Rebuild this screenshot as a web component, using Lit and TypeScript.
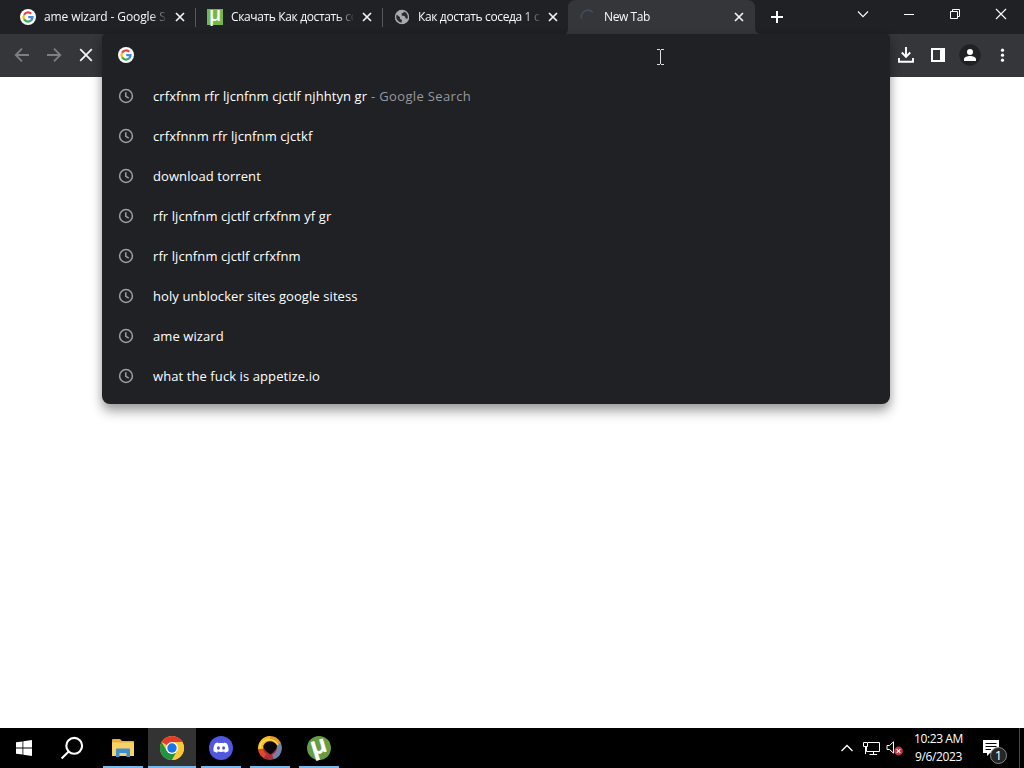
import { LitElement, html, css, svg, nothing } from "lit";
import { customElement, property } from "lit/decorators.js";

const googleIcon = html`
  <svg width="16" height="16" viewBox="0 0 16 16">
    <circle cx="8" cy="8" r="8" fill="#fff" />
    <g fill="none" stroke-width="2.2">
      <path d="M4.1 5.7A4.5 4.5 0 0 1 11.2 4.8" stroke="#ea4335" />
      <path d="M4.1 10.3A4.6 4.6 0 0 1 4.1 5.7" stroke="#fbbc05" />
      <path d="M10.9 11.5A4.5 4.5 0 0 1 4.1 10.3" stroke="#34a853" />
      <path d="M8.2 8.1H12.5A4.5 4.5 0 0 1 10.8 11.5" stroke="#4285f4" />
    </g>
  </svg>`;

const utorrentIcon = html`
  <svg width="16" height="16" viewBox="0 0 16 16">
    <rect width="16" height="16" fill="#76b74a" />
    <text x="8" y="12" text-anchor="middle" font-family="Open Sans, sans-serif" font-size="19" font-weight="600" fill="#fff">µ</text>
  </svg>`;

const globeIcon = html`
  <svg width="16" height="16" viewBox="0 0 16 16">
    <circle cx="8" cy="8" r="7" fill="#a9abae" />
    <path d="M2.4 5.2L6 8.2L6.2 10L8 11L7.6 14L5.5 13.2L2.2 10.2L1.5 7ZM9.2 1.3L10 3.2L7.6 4.6L7.8 6.5L10.8 7.2L11.8 9.5L13.6 10L14.5 7L12.5 3Z" fill="#2b2c2f" />
    <circle cx="8" cy="8" r="6.5" fill="none" stroke="#a9abae" stroke-width="1.3" />
  </svg>`;

const spinnerIcon = html`
  <svg width="16" height="16" viewBox="0 0 16 16">
    <path d="M1.5 9.5A6.7 6.7 0 0 1 12.8 3.3" fill="none" stroke="#414b66" stroke-width="1.6" />
  </svg>`;

const historyIcon = html`
  <svg width="16" height="16" viewBox="0 0 16 16" fill="none" stroke="#9aa0a6" stroke-width="1.5">
    <circle cx="8" cy="8" r="6.4" />
    <path d="M7.8 4.2V8.3L10.8 10.1" />
  </svg>`;

// square stroked icon, drawn on a grid of its own size
const line = (size: number, d: string, width = 1, color = "#fff") => html`
  <svg width=${size} height=${size} viewBox="0 0 ${size} ${size}" fill="none" stroke=${color} stroke-width=${width}>
    ${svg`<path d=${d} />`}
  </svg>`;

const chromeIcon = html`
  <svg width="24" height="24" viewBox="0 0 24 24">
    <circle cx="12" cy="12" r="12" fill="#fcc934" />
    <path d="M12 12L1.6 6A12 12 0 0 1 22.4 6H12Z" fill="#e33b2e" />
    <path d="M1.6 6A12 12 0 0 0 12 24L17.2 15L12 12L6.8 15Z" fill="#229342" />
    <path d="M12 6H22.4A12 12 0 0 1 12 24L17.2 15Z" fill="#fcc934" />
    <circle cx="12" cy="12" r="6" fill="#fff" />
    <circle cx="12" cy="12" r="4.7" fill="#1a73e8" />
  </svg>`;

const explorerIcon = html`
  <svg width="22" height="18" viewBox="0 0 22 18">
    <path d="M0 1.2Q0 0 1 0H8L10 2H21Q22 2 22 3V17H0Z" fill="#e9b13c" />
    <path d="M0 3.5H22V17H0Z" fill="#f8d264" />
    <path d="M4 18V10.5Q4 9.5 5 9.5H17Q18 9.5 18 10.5V18H14.5V14H7.5V18Z" fill="#3f8fd0" />
  </svg>`;

const discordIcon = html`
  <svg width="24" height="24" viewBox="0 0 24 24">
    <circle cx="12" cy="12" r="12" fill="#5058e0" />
    <path d="M9.4 6.4L8.9 7.2C10.9 6.8 13.1 6.8 15.1 7.2L14.6 6.4C16 6.5 17.2 7 17.9 7.4C19.3 9.7 19.8 12.3 19.5 15.1C18.3 16.1 17.2 16.5 16 16.8L15.2 15.5C13.2 16 10.8 16 8.8 15.5L8 16.8C6.8 16.5 5.7 16.1 4.5 15.1C4.2 12.3 4.7 9.7 6.1 7.4C6.9 6.9 8 6.5 9.4 6.4Z" fill="#fff" />
    <ellipse cx="9.4" cy="12" rx="1.5" ry="1.7" fill="#5058e0" />
    <ellipse cx="14.6" cy="12" rx="1.5" ry="1.7" fill="#5058e0" />
  </svg>`;

const ringIcon = html`
  <svg width="24" height="24" viewBox="0 0 24 24">
    <circle cx="12" cy="12" r="11" fill="#b82a31" />
    <g fill="none" stroke-width="5">
      <path d="M9 21A9.5 9.5 0 0 1 2.5 12" stroke="#dd4a2a" />
      <path d="M16.5 20.4A9.5 9.5 0 0 1 7 20" stroke="#a8303c" />
      <path d="M20 7A9.5 9.5 0 0 1 15 21" stroke="#6f82ac" />
      <path d="M11 2.5A9.5 9.5 0 0 1 20.5 8" stroke="#ec9a2b" />
      <path d="M2.6 13A9.5 9.5 0 0 1 12 2.5" stroke="#f6bd20" />
    </g>
    <path d="M2 12Q2 5 10 3.5Q17 3.5 20 9" fill="none" stroke="#fbdf45" stroke-width="1.5" />
    <path d="M5.5 10Q6.5 6 12 5.5Q18 6 19 10Q19 14 12.5 18.5Q5.5 14.5 5.5 10Z" fill="#08080a" />
  </svg>`;

const utorrentAppIcon = html`
  <svg width="24" height="24" viewBox="0 0 24 24">
    <circle cx="12" cy="12" r="12" fill="#669c43" />
    <text x="12" y="17.5" text-anchor="middle" font-family="Open Sans, sans-serif" font-size="25" font-weight="700" fill="#fff" transform="rotate(-17 12 12)">µ</text>
  </svg>`;

const windowsIcon = html`
  <svg width="16" height="16" viewBox="0 0 16 16" fill="#fff">
    <path d="M0 2.3L6.5 1.4V7.6H0ZM7.3 1.2L16 0V7.6H7.3ZM0 8.4H6.5V14.6L0 13.7ZM7.3 8.4H16V16L7.3 14.8Z" />
  </svg>`;

@customElement("browser-tab")
export class BrowserTab extends LitElement {
  @property() label = "";
  @property({ attribute: false }) icon: unknown = nothing;
  @property({ type: Boolean, reflect: true }) active = false;
  @property({ type: Boolean, reflect: true }) divided = false;

  static styles = css`
    :host {
      box-sizing: border-box;
      display: flex;
      align-items: center;
      width: 187px;
      height: 34px;
      padding-left: 11px;
    }

    :host([divided]) {
      background: linear-gradient(#55575b, #55575b) right 8px / 1px 19px no-repeat;
    }

    :host([lang="ru"]) .label {
      letter-spacing: -0.36px;
    }

    /* the foot of the active tab flares out on both sides */
    :host([active]) {
      width: 195px;
      margin-left: -5px;
      padding-left: 15px;
      background: #35363a;
      clip-path: path("M0 34Q3 33 3 28V8Q3 0 11 0H182Q190 0 190 8V28Q190 33 195 34Z");
    }

    svg {
      display: block;
      flex: none;
      overflow: visible;
    }

    .label {
      flex: none;
      width: 122px;
      margin: 0 8px;
      white-space: nowrap;
      font-size: 12px;
      line-height: 18px;
      letter-spacing: -0.1px;
      color: #f8f9fa;
      mask-image: linear-gradient(90deg, #000 106px, transparent 124px);
    }

    :host(:not([divided])) .label {
      margin-right: 7px;
    }

    :host([active]) .label {
      letter-spacing: -0.4px;
    }
  `;

  render() {
    return html`
      ${this.icon}
      <div class="label">${this.label}</div>
      ${line(12, "M2 2L10 10M10 2L2 10", 1.7, "#f1f3f4")}
    `;
  }
}

@customElement("omnibox-popup")
export class OmniboxPopup extends LitElement {
  rows = [
    { text: "crfxfnm rfr ljcnfnm cjctlf njhhtyn gr", hint: " - Google Search" },
    { text: "crfxfnnm rfr ljcnfnm cjctkf" },
    { text: "download torrent" },
    { text: "rfr ljcnfnm cjctlf crfxfnm yf gr" },
    { text: "rfr ljcnfnm cjctlf crfxfnm" },
    { text: "holy unblocker sites google sitess" },
    { text: "ame wizard" },
    { text: "what the fuck is appetize.io" },
  ];

  static styles = css`
    :host {
      box-sizing: border-box;
      display: block;
      width: 788px;
      height: 370px;
      background: #202124;
      border-radius: 4px 4px 8px 8px;
      box-shadow: 0 8px 12px rgba(0, 0, 0, 0.3), 0 2px 8px rgba(0, 0, 0, 0.16);
    }

    svg {
      display: block;
      flex: none;
    }

    .input,
    .row {
      display: flex;
      align-items: center;
      gap: 19px;
      height: 40px;
      padding-left: 16px;
    }

    .input {
      height: 42px;
    }

    .text {
      font-size: 13px;
      line-height: 20px;
      letter-spacing: 0.09px;
      color: #fff;
      white-space: pre;
    }

    .hint {
      letter-spacing: 0.36px;
      color: #96999d;
    }
  `;

  render() {
    return html`
      <div class="input">${googleIcon}</div>
      ${this.rows.map(
        (row) => html`
          <div class="row">
            ${historyIcon}
            <div class="text">${row.text}<span class="hint">${row.hint ?? ""}</span></div>
          </div>
        `
      )}
    `;
  }
}

@customElement("task-bar")
export class TaskBar extends LitElement {
  apps = [
    { icon: explorerIcon, state: "open" },
    { icon: chromeIcon, state: "current" },
    { icon: discordIcon, state: "open" },
    { icon: ringIcon, state: "open" },
    { icon: utorrentAppIcon, state: "open" },
  ];

  static styles = css`
    :host {
      display: flex;
      height: 40px;
      background: #000;
      color: #fff;
    }

    svg {
      display: block;
      flex: none;
      overflow: visible;
    }

    .button,
    .app {
      display: flex;
      align-items: center;
      justify-content: center;
      width: 48px;
    }

    .apps {
      display: flex;
      gap: 1px;
      padding-left: 3px;
    }

    .app {
      background: linear-gradient(#76b9ed, #76b9ed) center bottom / 40px 2px no-repeat;
    }

    .app.current {
      background: linear-gradient(#76b9ed, #76b9ed) center bottom / 48px 2px no-repeat, #333;
    }

    .tray {
      display: flex;
      align-items: center;
      margin-left: auto;
    }

    .network {
      margin: 0 6px 0 9px;
    }

    .clock {
      width: 69px;
      font-size: 12px;
      line-height: 18px;
      letter-spacing: -0.4px;
      text-align: center;
      white-space: nowrap;
    }

    .notes {
      margin: 1px 12px 0 8px;
    }

    .desktop {
      width: 4px;
      height: 40px;
      border-left: 1px solid #4a4a4a;
    }
  `;

  render() {
    return html`
      <div class="button">${windowsIcon}</div>
      <div class="button">
        <svg width="24" height="24" viewBox="0 0 24 24" fill="none" stroke="#fff" stroke-width="2.1">
          <circle cx="14.2" cy="9.8" r="7.9" />
          <path d="M8.7 15.4L1.6 22.4" />
        </svg>
      </div>
      <div class="apps">
        ${this.apps.map((app) => html`<div class="app ${app.state}">${app.icon}</div>`)}
      </div>
      <div class="tray">
        ${line(14, "M1.5 10L7 4.5L12.5 10", 1.3)}
        <svg class="network" width="17" height="16" viewBox="0 0 17 16" fill="none" stroke="#fff">
          <path d="M5 2.5H16.5V11.5H3.5V7M10.5 11.5V14.5M6.5 14.5H14" />
          <path d="M0.5 2.5H4.5V6.5H0.5ZM2.5 6.5V14" />
        </svg>
        <svg width="18" height="16" viewBox="0 0 18 16">
          <path d="M1 5.5H3.5L7.5 1.8V13.2L3.5 9.5H1Z" fill="none" stroke="#fff" />
          <circle cx="12.5" cy="11" r="4.4" fill="#c9343d" />
          <path d="M10.7 9.2L14.3 12.8M14.3 9.2L10.7 12.8" stroke="#fff" stroke-width="1.1" />
        </svg>
        <div class="clock">10:23 AM<br />9/6/2023</div>
        <svg class="notes" width="26" height="26" viewBox="0 0 26 26">
          <path d="M2 4H18V17H9L6 20V17H2Z" fill="#fff" />
          <path d="M4.5 7.5H15.5M4.5 10.5H15.5M4.5 13.5H10" stroke="#000" />
          <circle cx="17.5" cy="19.5" r="8" fill="#262626" stroke="#858585" />
          <text x="17.5" y="24.2" text-anchor="middle" font-size="13" fill="#fff">1</text>
        </svg>
        <div class="desktop"></div>
      </div>
    `;
  }
}

@customElement("app-root")
export class AppRoot extends LitElement {
  tabs = [
    { label: "ame wizard - Google Se", lang: "en", icon: googleIcon, divided: true },
    { label: "Скачать Как достать со", lang: "ru", icon: utorrentIcon, divided: true },
    { label: "Как достать соседа 1 с", lang: "ru", icon: globeIcon },
    { label: "New Tab", lang: "en", icon: spinnerIcon, active: true },
  ];

  static styles = css`
    :host {
      position: relative;
      display: flex;
      flex-direction: column;
      width: 1024px;
      height: 768px;
      overflow: hidden;
      background: #fff;
      font-family: "Open Sans", "Noto Sans", sans-serif;
    }

    svg {
      display: block;
      flex: none;
    }

    .tabs {
      display: flex;
      height: 34px;
      padding-left: 9px;
      background: #202124;
    }

    .new-tab {
      display: flex;
      align-items: center;
      padding-left: 10px;
    }

    .window {
      display: flex;
      height: 28px;
      margin-left: auto;
    }

    .window div {
      display: flex;
      align-items: center;
      justify-content: center;
      width: 46px;
    }

    .toolbar {
      box-sizing: border-box;
      display: flex;
      justify-content: space-between;
      height: 43px;
      padding-bottom: 1px;
      background: #35363a;
    }

    .group {
      display: flex;
      padding: 0 6px;
    }

    .group div {
      display: flex;
      align-items: center;
      justify-content: center;
      width: 32px;
    }

    .page {
      flex: 1;
    }

    omnibox-popup {
      position: absolute;
      left: 102px;
      top: 34px;
    }

    .cursor {
      position: absolute;
      left: 656px;
      top: 49px;
    }
  `;

  render() {
    return html`
      <div class="tabs">
        ${this.tabs.map(
          (tab) => html`
            <browser-tab
              lang=${tab.lang}
              .label=${tab.label}
              .icon=${tab.icon}
              ?active=${tab.active}
              ?divided=${tab.divided}
            ></browser-tab>
          `
        )}
        <div class="new-tab">${line(14, "M7 1V13M1 7H13", 2)}</div>
        <div class="window">
          <div>${line(12, "M1 3.5L6 8.7L11 3.5", 1.1)}</div>
          <div>${line(10, "M0 5.5H10")}</div>
          <div>${line(10, "M0.5 2.5H7.5V9.5H0.5ZM2.5 2.5V0.5H9.5V7.5H7.5")}</div>
          <div>${line(12, "M1 1L11 11M11 1L1 11", 1.1)}</div>
        </div>
      </div>
      <div class="toolbar">
        <div class="group">
          <div>${line(16, "M15 8H2M8 1.7L1.7 8L8 14.3", 1.8, "#7d7f83")}</div>
          <div>${line(16, "M1 8H14M8 1.7L14.3 8L8 14.3", 1.8, "#7d7f83")}</div>
          <div>${line(16, "M2.2 2.2L13.8 13.8M13.8 2.2L2.2 13.8", 1.8, "#f1f3f4")}</div>
        </div>
        <div class="group">
          <div>${line(18, "M9 1V10.5M4.8 6.5L9 10.8L13.2 6.5M2 12V15.7H16V12", 1.9)}</div>
          <div>
            <svg width="16" height="16" viewBox="0 0 16 16">
              <path d="M1 1H15V15H1ZM3 3V13H10V3Z" fill="#fff" fill-rule="evenodd" />
            </svg>
          </div>
          <div>
            <svg width="22" height="22" viewBox="0 0 22 22">
              <circle cx="11" cy="11" r="10.7" fill="#202124" />
              <circle cx="11" cy="8" r="3" fill="#fff" />
              <path d="M5 17V15.2C5 13 8.5 12 11 12S17 13 17 15.2V17Z" fill="#fff" />
            </svg>
          </div>
          <div>
            <svg width="16" height="16" viewBox="0 0 16 16" fill="#fff">
              <circle cx="8.5" cy="3.2" r="1.6" />
              <circle cx="8.5" cy="8.2" r="1.6" />
              <circle cx="8.5" cy="13.2" r="1.6" />
            </svg>
          </div>
        </div>
      </div>
      <div class="page"></div>
      <task-bar></task-bar>
      <omnibox-popup></omnibox-popup>
      <svg class="cursor" width="9" height="16" viewBox="0 0 9 16" fill="none" stroke="#ddd">
        <path d="M1 0.5H4M5 0.5H8M4.5 1V15M1 15.5H4M5 15.5H8" />
      </svg>
    `;
  }
}
